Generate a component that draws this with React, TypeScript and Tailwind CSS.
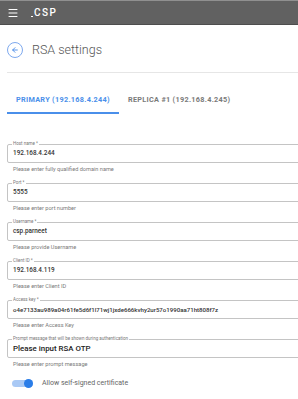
import { ArrowLeft, Menu } from 'lucide-react';

interface FieldProps {
  label: string;
  value: string;
  helper: string;
  big?: boolean;
  small?: boolean;
}

function Field({ label, value, helper, big, small }: FieldProps) {
  const valueClass = big
    ? 'text-[7.9px] font-medium text-[#222] whitespace-nowrap mt-[1px]'
    : small
    ? 'text-[6.1px] font-medium text-[#333] whitespace-nowrap mt-[1px]'
    : 'text-[6.4px] font-medium text-[#333] whitespace-nowrap mt-[1px]';

  return (
    <div className="mb-[10px]">
      <div className="relative h-[19px] w-[calc(100%+20px)] rounded-[2px] border border-[#c4c4c4] flex items-center pl-[5px]">
        <span className="absolute left-[4px] top-[-4px] bg-white px-[1px] text-[4.5px] leading-[6px] text-[#777]">
          {label}
        </span>
        <span className={valueClass}>{value}</span>
      </div>
      <p className="mt-[2px] pl-[6px] text-[5.6px] leading-[8px] text-[#7a7a7a]">{helper}</p>
    </div>
  );
}

export default function App() {
  return (
    <div className="w-[298px] h-[399px] overflow-hidden bg-white font-['Roboto',sans-serif]">
      {/* Top bar */}
      <div className="h-[25px] bg-[#616161] border-t border-[#909090] border-b border-b-[#4d4d4d] flex items-center pl-[7px]">
        <Menu size={12} color="#ffffff" strokeWidth={2} />
        <div className="ml-[12px] flex items-end text-white">
          <span className="mb-[1px] mr-[1px] h-[1px] w-[2px] bg-white" />
          <span className="text-[10px] leading-[10px] font-medium tracking-[1.5px]">CSP</span>
        </div>
      </div>

      {/* Title */}
      <div className="pt-[17px] pl-[7px] flex items-center gap-[9px]">
        <div className="w-[16px] h-[16px] rounded-full border border-[#7ea9ee] flex items-center justify-center">
          <ArrowLeft size={8} color="#3b82e6" strokeWidth={2.5} />
        </div>
        <span className="text-[12.5px] leading-[16px] font-light text-[#555]">RSA settings</span>
      </div>
      <div className="mt-[14px] ml-[7px] h-px bg-[#e6e6e6]" />

      {/* Tabs */}
      <div className="flex ml-[7px]">
        <div className="px-[9px] pt-[22px] pb-[7px] border-b-2 border-[#4a8fea] text-[7.3px] leading-[10px] font-bold tracking-[0.3px] text-[#4a8fea] whitespace-nowrap">
          PRIMARY (192.168.4.244)
        </div>
        <div className="px-[9px] pt-[22px] pb-[7px] text-[7.3px] leading-[10px] font-bold tracking-[0.3px] text-[#7a7a7a] whitespace-nowrap">
          REPLICA #1 (192.168.4.245)
        </div>
      </div>

      {/* Form */}
      <div className="mt-[30px] ml-[7px]">
        <Field label="Host name *" value="192.168.4.244" helper="Please enter fully qualified domain name" />
        <Field label="Port *" value="5555" helper="Please enter port number" />
        <Field label="Username *" value="csp.parneet" helper="Please provide Username" />
        <Field label="Client ID *" value="192.168.4.119" helper="Please enter Client ID" />
        <Field
          label="Access key *"
          value="o4e7133au989a04r61fe5d6f1l71wj1jxde666kvhy2ur57o1990aa71ht808f7z"
          helper="Please enter Access Key"
          small
        />
        <Field
          label="Prompt message that will be shown during authentication"
          value="Please input RSA OTP"
          helper="Please enter prompt message"
          big
        />
      </div>

      {/* Toggle */}
      <div className="mt-[4px] ml-[12px] flex items-center gap-[9px]">
        <div className="relative w-[21px] h-[7px] rounded-full bg-[#a9c9f5]">
          <span className="absolute right-0 top-[-1px] w-[9px] h-[9px] rounded-full bg-[#2a7de8]" />
        </div>
        <span className="text-[7px] leading-[10px] text-[#666]">Allow self-signed certificate</span>
      </div>
    </div>
  );
}
